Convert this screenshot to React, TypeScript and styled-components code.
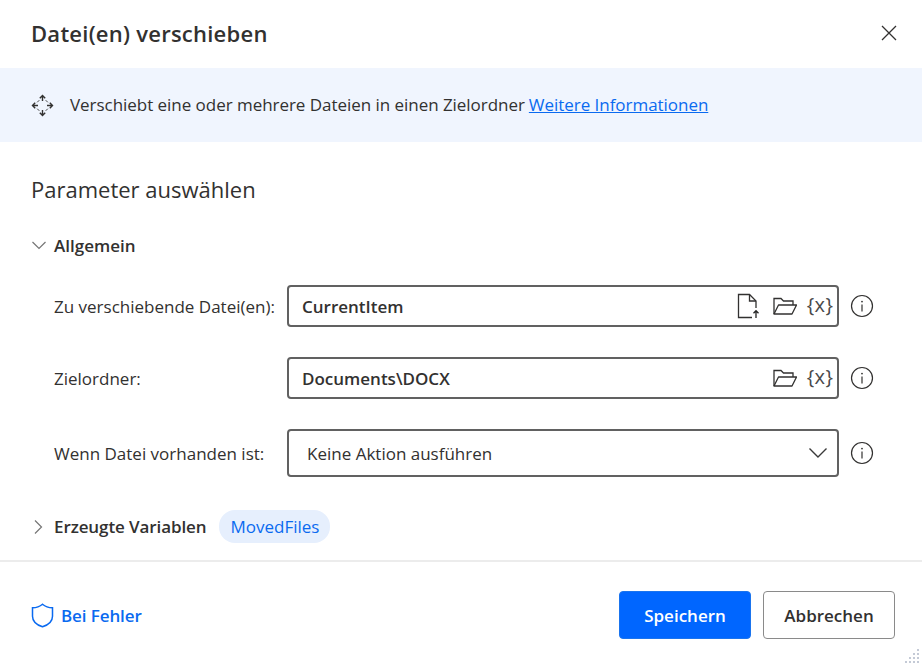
import React from "react";
import styled, { createGlobalStyle } from "styled-components";

const Global = createGlobalStyle`
  html, body { margin: 0; padding: 0; background: #fff; }
  body { font-family: "Open Sans", "Noto Sans", "Liberation Sans", sans-serif; color: #323130; }
  * { box-sizing: border-box; }
`;

const Dialog = styled.div`
  position: relative;
  width: 922px;
  height: 665px;
  background: #fff;
  display: flex;
  flex-direction: column;
  overflow: hidden;
`;
const Header = styled.header`
  height: 68px;
  padding: 0 24px 2px 31px;
  display: flex;
  align-items: center;
  justify-content: space-between;
`;
const Title = styled.h1`
  margin: 0;
  font-size: 22px;
  font-weight: 600;
  letter-spacing: 0.25px;
  color: #323130;
`;
const CloseButton = styled.button`
  border: 0;
  background: none;
  padding: 0;
  width: 18px;
  height: 18px;
  color: #323130;
  display: flex;
`;
const Banner = styled.div`
  height: 74px;
  background: #f0f5fe;
  padding: 0 31px 1px;
  display: flex;
  align-items: center;
  gap: 16px;
  font-size: 17px;
  letter-spacing: -0.04px;
  color: #323130;
`;
const BannerLink = styled.a`
  color: #0a6af0;
  text-decoration: underline;
  margin-left: 4px;
`;
const Body = styled.main`
  flex: 1;
  padding: 30px 0 0 31px;
`;
const SectionTitle = styled.h2`
  margin: 0;
  font-size: 22px;
  line-height: 34px;
  font-weight: 400;
  color: #323130;
`;
const GroupHead = styled.div`
  margin-top: 27px;
  height: 24px;
  display: flex;
  align-items: center;
  font-size: 17px;
  font-weight: 600;
  color: #323130;
`;
const Chevron = styled.span`
  width: 23px;
  display: flex;
  color: #757575;
`;
const Rows = styled.div`
  margin: 28px 0 0 23px;
  display: grid;
  grid-template-columns: 233px 552px 35px;
  row-gap: 30px;
  align-items: center;
`;
const Label = styled.label`
  font-size: 17px;
  color: #323130;
`;
const Field = styled.div<{ $tall?: boolean }>`
  height: ${(p) => (p.$tall ? "48px" : "42px")};
  border: 2px solid #616161;
  border-radius: 4px;
  padding: 0 0 0 ${(p) => (p.$tall ? "18px" : "13px")};
  display: flex;
  align-items: center;
  font-size: 17px;
  font-weight: ${(p) => (p.$tall ? 400 : 600)};
  color: #323130;
`;
const FieldValue = styled.span`
  flex: 1;
`;
const FieldIcons = styled.span`
  display: flex;
  align-items: center;
  color: #323130;
`;
const IconSlot = styled.span<{ $w: number }>`
  width: ${(p) => p.$w}px;
  display: flex;
  justify-content: center;
`;
const VarToken = styled.span`
  font-size: 20px;
  font-weight: 400;
  letter-spacing: 0.4px;
  color: #4a4a4a;
  line-height: 22px;
  margin-top: -3px;
`;
const InfoCell = styled.span`
  padding-left: 11px;
  display: flex;
  color: #323130;
`;
const OutputHead = styled(GroupHead)`
  margin-top: 33px;
  height: 33px;
  letter-spacing: -0.1px;
`;
const Pill = styled.span`
  margin-left: 13px;
  height: 33px;
  padding: 0 11px;
  border-radius: 16px;
  background: #e6effd;
  color: #0a6af0;
  font-weight: 400;
  letter-spacing: 0;
  display: flex;
  align-items: center;
`;
const Footer = styled.footer`
  height: 105px;
  border-top: 2px solid #ececec;
  padding: 29px 27px 0 31px;
  display: flex;
  justify-content: space-between;
`;
const ErrorLink = styled.a`
  height: 48px;
  display: flex;
  align-items: center;
  gap: 7px;
  color: #0a6af0;
  font-size: 17px;
  font-weight: 600;
  letter-spacing: -0.1px;
`;
const Actions = styled.div`
  display: flex;
  gap: 12px;
`;
const Button = styled.button<{ $primary?: boolean }>`
  width: 132px;
  height: 48px;
  border-radius: 4px;
  border: 1px solid ${(p) => (p.$primary ? "#1a74ee" : "#8a8a8a")};
  background: ${(p) => (p.$primary ? "#0066ff" : "#fff")};
  color: ${(p) => (p.$primary ? "#fff" : "#323130")};
  font-family: inherit;
  font-size: 17px;
  font-weight: 600;
  padding: 0;
`;
const Grip = styled.svg`
  position: absolute;
  right: 2px;
  bottom: 1px;
`;
const MoveGlyph = styled.svg`
  flex: none;
  margin-top: 1px;
`;
const SelectChevron = styled.svg`
  margin-right: 9px;
`;

const Info = () => (
  <svg width="24" height="24" viewBox="0 0 24 24" fill="none" stroke="currentColor">
    <circle cx="12" cy="12" r="10.5" strokeWidth="1.2" />
    <circle cx="12" cy="7.6" r="0.9" fill="currentColor" stroke="none" />
    <path d="M12 10.6v7" strokeWidth="1.2" />
  </svg>
);
const Folder = () => (
  <svg width="24" height="20" viewBox="0 0 24 20" fill="none" stroke="currentColor" strokeWidth="1.3">
    <path d="M1 18V2.5h7l2.5 2.5H20v4" />
    <path d="M1 18l4.5-9H23.5l-4.5 9z" strokeLinejoin="round" />
  </svg>
);
const FileUp = () => (
  <svg width="24" height="26" viewBox="0 0 24 26" fill="none" stroke="currentColor" strokeWidth="1.3">
    <path d="M15 24.5H1.5V1.5h11l6.5 6.5v7" />
    <path d="M12.5 1.5V8H19" />
    <path d="M19 25v-7M16.5 20.2L19 17.7l2.5 2.5" stroke="#222" />
  </svg>
);
const VarIcon = () => <VarToken>{"{x}"}</VarToken>;
const Shield = () => (
  <svg width="23" height="25" viewBox="0 0 23 25" fill="none" stroke="currentColor" strokeWidth="1.5">
    <path d="M11.5 1.2c2.6 2.2 6 3.5 10 3.6v8.4c0 4.8-3.4 8.4-10 10.6-6.6-2.2-10-5.8-10-10.6V4.8c4-.1 7.4-1.4 10-3.6z" />
  </svg>
);

const dots: [number, number][] = [
  [14, 2], [10, 6], [14, 6], [6, 10], [10, 10], [14, 10], [2, 14], [6, 14], [10, 14], [14, 14],
];

export default function App() {
  return (
    <Dialog>
      <Global />
      <Header>
        <Title>Datei(en) verschieben</Title>
        <CloseButton aria-label="Schließen">
          <svg width="18" height="18" viewBox="0 0 18 18" stroke="currentColor" strokeWidth="1.3">
            <path d="M2 2l14 14M16 2L2 16" />
          </svg>
        </CloseButton>
      </Header>
      <Banner>
        <MoveGlyph width="23" height="23" viewBox="0 0 23 23" fill="none" stroke="#323130" strokeWidth="1.4">
          <path d="M11.5 1.5V7M8.8 4.2l2.7-2.7 2.7 2.7M11.5 21.5V16M8.8 18.8l2.7 2.7 2.7-2.7M1.5 11.5H7M4.2 8.8l-2.7 2.7 2.7 2.7M21.5 11.5H16M18.8 8.8l2.7 2.7-2.7 2.7" />
          <path d="M6.2 8.3l2.1-2.1M14.7 6.2l2.1 2.1M16.8 14.7l-2.1 2.1M8.3 16.8l-2.1-2.1" strokeWidth="0.9" />
        </MoveGlyph>
        <span>
          Verschiebt eine oder mehrere Dateien in einen Zielordner
          <BannerLink href="#">Weitere Informationen</BannerLink>
        </span>
      </Banner>
      <Body>
        <SectionTitle>Parameter auswählen</SectionTitle>
        <GroupHead>
          <Chevron>
            <svg width="16" height="16" viewBox="0 0 16 16" fill="none" stroke="currentColor" strokeWidth="1.2">
              <path d="M1.5 5L8 11.5 14.5 5" />
            </svg>
          </Chevron>
          Allgemein
        </GroupHead>
        <Rows>
          <Label>Zu verschiebende Datei(en):</Label>
          <Field>
            <FieldValue>CurrentItem</FieldValue>
            <FieldIcons>
              <IconSlot $w={36}><FileUp /></IconSlot>
              <IconSlot $w={36}><Folder /></IconSlot>
              <IconSlot $w={34}><VarIcon /></IconSlot>
            </FieldIcons>
          </Field>
          <InfoCell><Info /></InfoCell>

          <Label>Zielordner:</Label>
          <Field>
            <FieldValue>Documents\DOCX</FieldValue>
            <FieldIcons>
              <IconSlot $w={36}><Folder /></IconSlot>
              <IconSlot $w={34}><VarIcon /></IconSlot>
            </FieldIcons>
          </Field>
          <InfoCell><Info /></InfoCell>

          <Label>Wenn Datei vorhanden ist:</Label>
          <Field $tall>
            <FieldValue>Keine Aktion ausführen</FieldValue>
            <SelectChevron width="20" height="12" viewBox="0 0 20 12" fill="none" stroke="#3a3a3a" strokeWidth="1.4">
              <path d="M1.5 1.5L10 10l8.5-8.5" />
            </SelectChevron>
          </Field>
          <InfoCell><Info /></InfoCell>
        </Rows>
        <OutputHead>
          <Chevron>
            <svg width="14" height="16" viewBox="0 0 14 16" fill="none" stroke="currentColor" strokeWidth="1.2">
              <path d="M4 1.5L10.5 8 4 14.5" />
            </svg>
          </Chevron>
          Erzeugte Variablen
          <Pill>MovedFiles</Pill>
        </OutputHead>
      </Body>
      <Footer>
        <ErrorLink>
          <Shield />
          Bei Fehler
        </ErrorLink>
        <Actions>
          <Button $primary>Speichern</Button>
          <Button>Abbrechen</Button>
        </Actions>
      </Footer>
      <Grip width="16" height="16" viewBox="0 0 16 16" fill="#c4cad6">
        {dots.map(([x, y]) => (
          <rect key={`${x}-${y}`} x={x - 1} y={y - 1} width="2" height="2" />
        ))}
      </Grip>
    </Dialog>
  );
}
